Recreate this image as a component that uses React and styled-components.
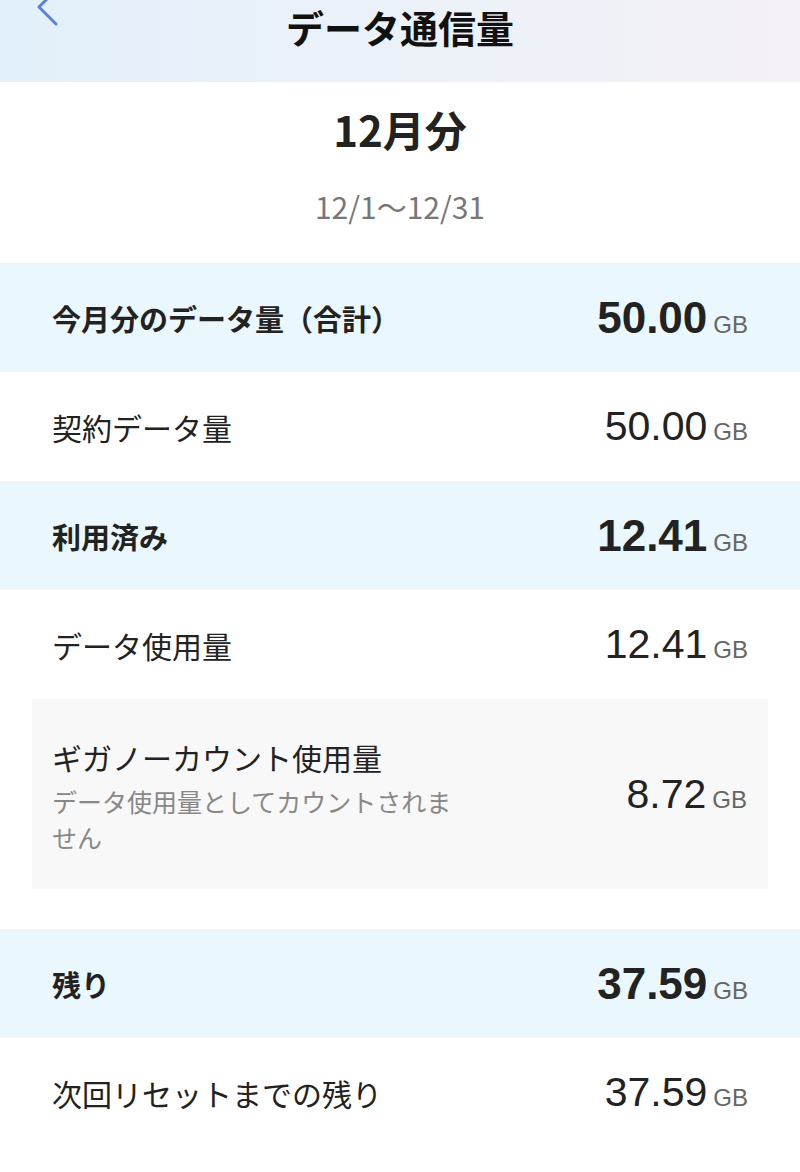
import React from 'react';
import styled, { createGlobalStyle } from 'styled-components';

const GlobalStyle = createGlobalStyle`
  * { box-sizing: border-box; }
  body {
    margin: 0;
    background: #fff;
    font-family: "Noto Sans CJK JP", "Noto Sans", sans-serif;
    color: #222;
  }
`;

const Page = styled.div`
  width: 800px;
  min-height: 1172px;
  background: #fff;
  display: flex;
  flex-direction: column;
`;

const Header = styled.header`
  position: relative;
  height: 82px;
  background: linear-gradient(90deg, #e2f0fb 0%, #ebf1f9 45%, #f4f1f7 100%);
  display: flex;
  justify-content: center;
  align-items: flex-start;
`;

const Title = styled.h1`
  margin: 0;
  margin-top: 4px;
  font-size: 38px;
  line-height: 46px;
  font-weight: 700;
  color: #111;
`;

const Back = styled.svg`
  position: absolute;
  left: 34px;
  top: -12px;
`;

const Period = styled.div`
  display: flex;
  flex-direction: column;
  align-items: center;
  height: 181px;
`;

const Month = styled.div`
  margin-top: 19px;
  font-size: 42px;
  line-height: 56px;
  font-weight: 700;
  color: #222;
`;

const Range = styled.div`
  margin-top: 29px;
  font-size: 30px;
  line-height: 40px;
  color: #777;
`;

const Row = styled.div`
  height: 109px;
  padding: 0 52px;
  display: flex;
  align-items: center;
  justify-content: space-between;
  background: ${p => (p.$total ? '#eaf7fc' : '#fff')};
`;

const Label = styled.div`
  font-size: ${p => (p.$bold ? '29px' : '30px')};
  font-weight: ${p => (p.$bold ? 700 : 400)};
  color: #222;
`;

const Value = styled.div`
  display: flex;
  align-items: baseline;
  gap: 6px;
  font-family: "Liberation Sans", Arial, sans-serif;
`;

const Num = styled.span`
  font-size: ${p => (p.$bold ? '44px' : '41px')};
  font-weight: ${p => (p.$bold ? 700 : 400)};
  color: #222;
`;

const Unit = styled.span`
  font-size: 24px;
  color: #666;
`;

const Card = styled.div`
  margin: 0 32px;
  height: 190px;
  padding: 0 21px 0 20px;
  background: #f8f8f8;
  display: flex;
  align-items: center;
  justify-content: space-between;
`;

const CardText = styled.div`
  width: 420px;
  display: flex;
  flex-direction: column;
  margin-top: 2px;
`;

const Note = styled.div`
  margin-top: 4px;
  font-size: 25px;
  line-height: 36px;
  color: #888;
`;

const Spacer = styled.div`
  height: 40px;
`;

const Amount = ({ value, bold }) => (
  <Value>
    <Num $bold={bold}>{value}</Num>
    <Unit>GB</Unit>
  </Value>
);

const App = () => {
  return (
    <Page>
      <GlobalStyle />
      <Header>
        <Back width="28" height="40" viewBox="0 0 28 40">
          <path d="M22 2 L5 19 L22 36" fill="none" stroke="#5b82d8" strokeWidth="3" strokeLinecap="round" strokeLinejoin="round" />
        </Back>
        <Title>データ通信量</Title>
      </Header>

      <Period>
        <Month>12月分</Month>
        <Range>12/1〜12/31</Range>
      </Period>

      <Row $total>
        <Label $bold>今月分のデータ量（合計）</Label>
        <Amount value="50.00" bold />
      </Row>
      <Row>
        <Label>契約データ量</Label>
        <Amount value="50.00" />
      </Row>

      <Row $total>
        <Label $bold>利用済み</Label>
        <Amount value="12.41" bold />
      </Row>
      <Row>
        <Label>データ使用量</Label>
        <Amount value="12.41" />
      </Row>
      <Card>
        <CardText>
          <Label>ギガノーカウント使用量</Label>
          <Note>データ使用量としてカウントされません</Note>
        </CardText>
        <Amount value="8.72" />
      </Card>

      <Spacer />

      <Row $total>
        <Label $bold>残り</Label>
        <Amount value="37.59" bold />
      </Row>
      <Row>
        <Label>次回リセットまでの残り</Label>
        <Amount value="37.59" />
      </Row>
    </Page>
  );
};

export default App;
